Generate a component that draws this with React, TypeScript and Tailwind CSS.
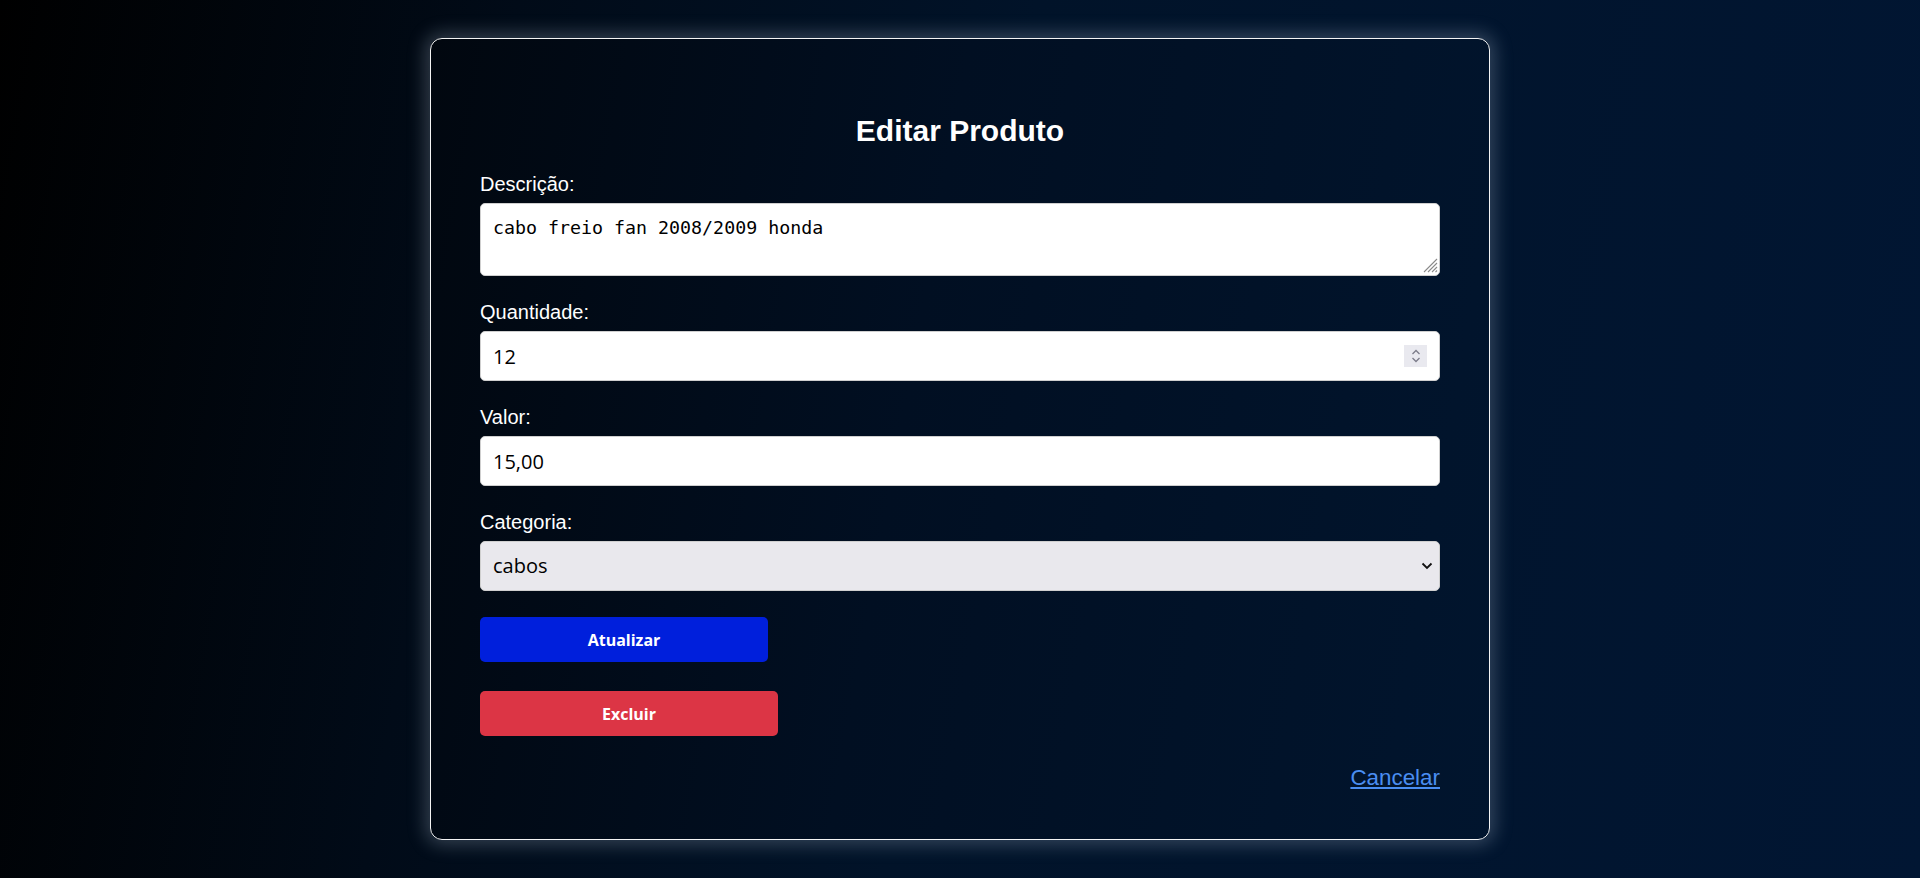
import React from "react";

export default function App() {
  const labelCls =
    "block text-[20px] leading-[23px] h-[23px] mb-[7px] text-white font-['Liberation_Sans',Arial,sans-serif]";
  const inputCls =
    "block w-full h-[50px] bg-white border border-[#cfcfcf] rounded-[5px] pl-[12px] pr-[12px] text-[20px] text-black font-['Open_Sans',Tahoma,sans-serif] outline-none";
  return (
    <div className="min-h-screen w-full flex items-center justify-center bg-[linear-gradient(100deg,#000000_0%,#010b18_25%,#011329_50%,#011633_100%)]">
      <div className="w-[1060px] border border-[#f4f4f4] rounded-[12px] pt-[75px] pb-[48px] px-[49px] shadow-[0_0_18px_5px_rgba(200,215,235,0.25)] bg-[linear-gradient(100deg,#01070f_0%,#010f22_45%,#01152e_100%)]">
        <h2 className="text-center text-white font-bold text-[30px] leading-[34px] font-['Liberation_Sans',Arial,sans-serif]">
          Editar Produto
        </h2>

        <div className="mt-[25px] mb-[25px]">
          <label className={labelCls}>Descrição:</label>
          <div className="relative">
            <textarea
              defaultValue="cabo freio fan 2008/2009 honda"
              className="block w-full h-[73px] resize-none bg-white border border-[#cfcfcf] rounded-[5px] pl-[12px] pr-[12px] pt-[13px] text-[18.3px] leading-[22px] text-black font-['DejaVu_Sans_Mono','Liberation_Mono',monospace] outline-none"
            />
            <svg
              className="absolute right-[2px] bottom-[3px] pointer-events-none"
              width="16"
              height="16"
              viewBox="0 0 16 16"
              fill="none"
            >
              <line x1="2" y1="15" x2="15" y2="2" stroke="#8a8a8a" strokeWidth="1.1" />
              <line x1="6" y1="15" x2="15" y2="6" stroke="#8a8a8a" strokeWidth="1.1" />
              <line x1="10" y1="15" x2="15" y2="10" stroke="#8a8a8a" strokeWidth="1.1" />
              <line x1="13.5" y1="15" x2="15" y2="13.5" stroke="#8a8a8a" strokeWidth="1.1" />
            </svg>
          </div>
        </div>

        <div className="mb-[25px]">
          <label className={labelCls}>Quantidade:</label>
          <div className="relative">
            <input type="text" defaultValue="12" className={inputCls} />
            <div className="absolute right-[13px] top-[14px] w-[23px] h-[22px] bg-[#e9e9ef] flex items-center justify-center">
              <svg width="10" height="18" viewBox="0 0 10 18" fill="none">
                <polyline points="1.5,7 5,3.5 8.5,7" stroke="#7c7c8a" strokeWidth="1.3" />
                <polyline points="1.5,11 5,14.5 8.5,11" stroke="#7c7c8a" strokeWidth="1.3" />
              </svg>
            </div>
          </div>
        </div>

        <div className="mb-[25px]">
          <label className={labelCls}>Valor:</label>
          <input type="text" defaultValue="15,00" className={inputCls} />
        </div>

        <div className="mb-[26px]">
          <label className={labelCls}>Categoria:</label>
          <div className="relative">
            <select
              defaultValue="cabos"
              className="block w-full h-[50px] appearance-none bg-[#e9e8ed] border border-[#cfcfcf] rounded-[5px] pl-[12px] pr-[30px] text-[20px] text-black font-['Open_Sans',Tahoma,sans-serif] outline-none"
            >
              <option value="cabos">cabos</option>
            </select>
            <svg
              className="absolute right-[7px] top-[21px] pointer-events-none"
              width="12"
              height="8"
              viewBox="0 0 12 8"
              fill="none"
            >
              <polyline points="1.5,1.5 6,6 10.5,1.5" stroke="#111" strokeWidth="1.8" />
            </svg>
          </div>
        </div>

        <button className="block w-[288px] h-[45px] rounded-[5px] bg-[#001fdc] text-white font-bold text-[16px] font-['Open_Sans',Tahoma,sans-serif] mb-[29px]">
          Atualizar
        </button>
        <button className="block w-[298px] h-[45px] rounded-[5px] bg-[#dc3545] text-white font-bold text-[16px] font-['Open_Sans',Tahoma,sans-serif]">
          Excluir
        </button>

        <div className="flex justify-end mt-[29px]">
          <a
            href="#"
            className="text-[22.4px] leading-[26px] text-[#4a8ef2] underline font-['Liberation_Sans',Arial,sans-serif]"
          >
            Cancelar
          </a>
        </div>
      </div>
    </div>
  );
}
